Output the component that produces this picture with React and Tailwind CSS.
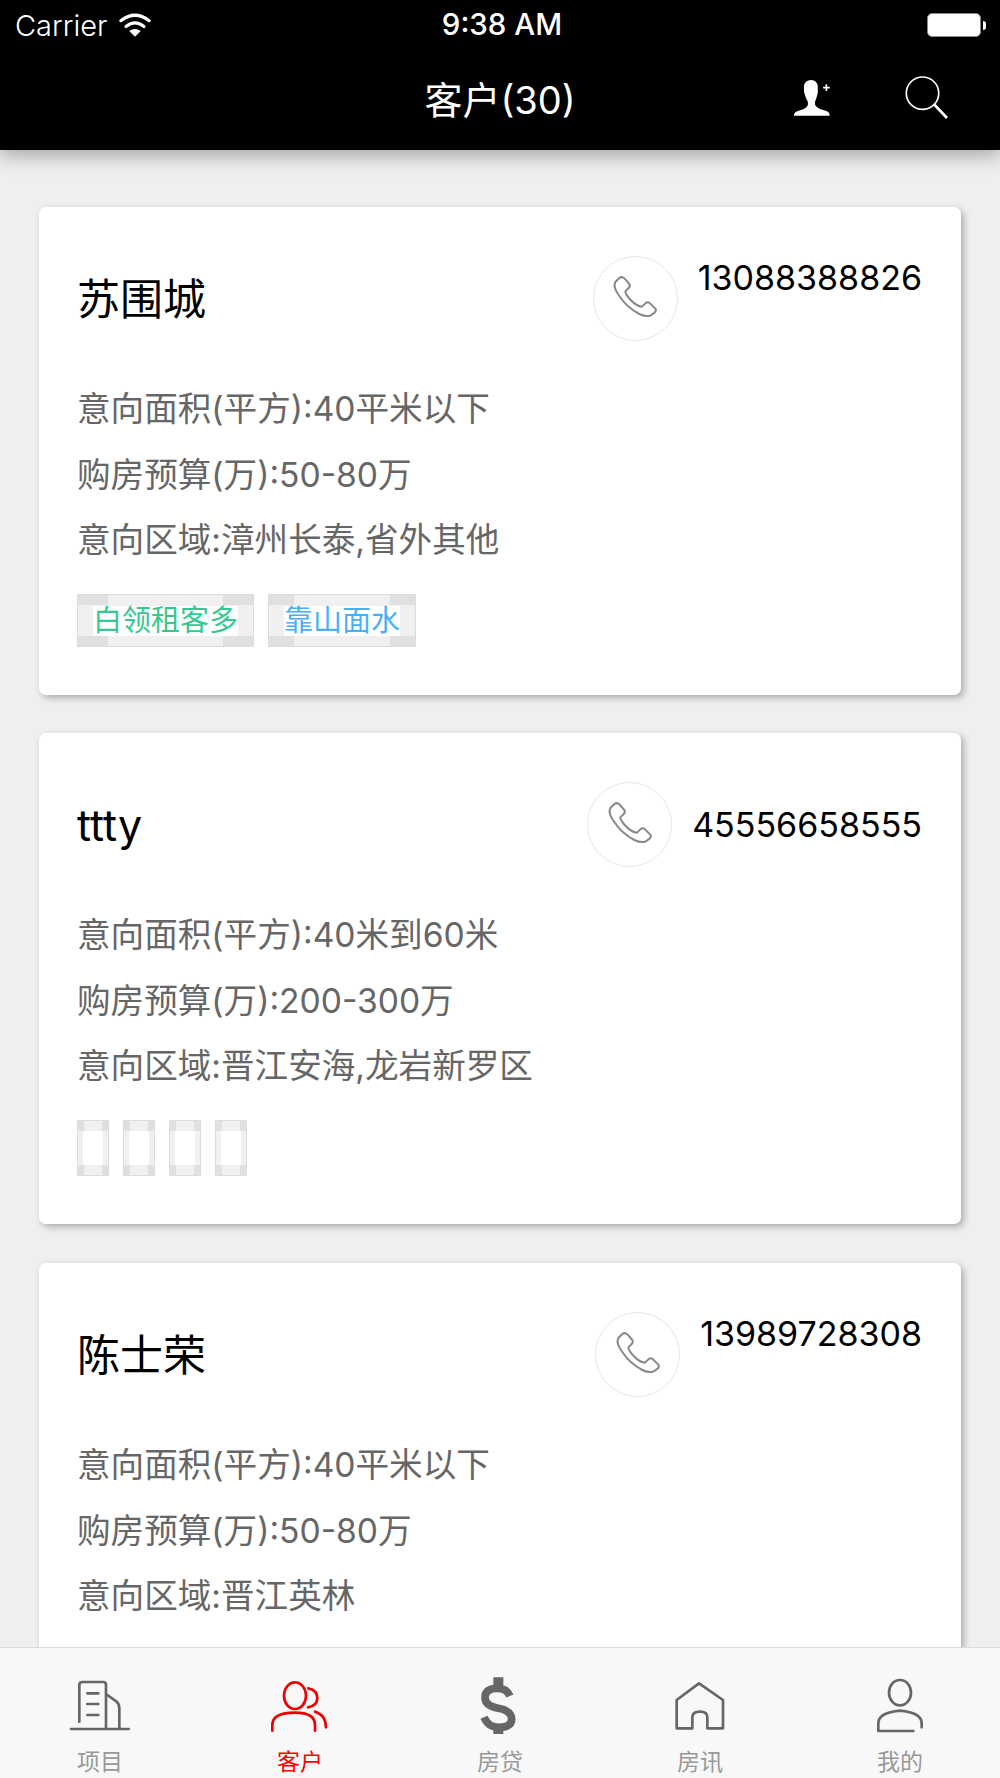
const FONT = "font-['Inter','Noto_Sans_CJK_SC',sans-serif]";

function Tag({ text, color, corner, tall }) {
  const cornerClass = `absolute h-[10px] bg-[#e0e0e0] ${corner}`;
  return (
    <div className="relative border border-[#dcdcdc] bg-[#f0f0f0]">
      <div className={`${cornerClass} left-0 top-0`} />
      <div className={`${cornerClass} right-0 top-0`} />
      <div className={`${cornerClass} left-0 bottom-0`} />
      <div className={`${cornerClass} right-0 bottom-0`} />
      {tall ? (
        <div className="relative mx-[5px] my-[10px] h-[34px] w-[20px] bg-white" />
      ) : (
        <div className={`relative mx-[15px] mb-[10px] mt-[11px] h-[30px] bg-white text-[29px] leading-[30px] ${color}`}>{text}</div>
      )}
    </div>
  );
}

function PhoneIcon() {
  return (
    <svg width="70" height="70" viewBox="0 0 210 210" fill="none" stroke="#888" strokeWidth="6" strokeLinejoin="round">
      <path d="M58 42 Q66 36 74 44 L88 60 Q92 66 86 72 L76 82 Q77 92 92 108 Q110 127 126 128 L136 118 Q144 112 150 118 L166 134 Q170 140 164 146 L152 154 Q140 160 118 150 Q80 130 58 96 Q38 70 46 54 Z" />
    </svg>
  );
}

function Card({ name, phone, lines, children, mb = "mb-[38px]", align = "items-start" }) {
  return (
    <div className={`rounded-[7px] bg-white pb-[48px] pl-[38px] pr-[39px] pt-[49px] shadow-[3px_3px_7px_rgba(0,0,0,0.28)] ${mb}`}>
      <div className="flex items-start justify-between">
        <div className="flex h-[86px] items-center text-[43px] leading-none text-black">{name}</div>
        <div className={`flex gap-[20px] ${align}`}>
          <div className="flex h-[85px] w-[85px] items-center justify-center rounded-full border border-[#e6e6e6]">
            <PhoneIcon />
          </div>
          <div className="text-[34px] leading-[44px] text-black">{phone}</div>
        </div>
      </div>
      <div className="mt-[34px] text-[33.6px] leading-[65.5px] text-[#666]">
        {lines.map((l) => (
          <div key={l}>{l}</div>
        ))}
      </div>
      {children && <div className="mt-[21.5px] flex gap-[14px]">{children}</div>}
    </div>
  );
}

const IC = { fill: "none", stroke: "#666", strokeWidth: 8, strokeLinecap: "round", strokeLinejoin: "round" };
const RED = { ...IC, stroke: "#ee0000" };

function TabIcon({ vb, children }) {
  return (
    <svg width="80" height="75" viewBox={vb} className="block">
      {children}
    </svg>
  );
}

function Tab({ label, active, vb, children }) {
  return (
    <div className="flex flex-col items-center pt-[22px]">
      <TabIcon vb={vb}>{children}</TabIcon>
      <div className={`mt-[2px] text-[23px] leading-[30px] ${active ? "text-[#ff0000]" : "text-[#999]"}`}>{label}</div>
    </div>
  );
}

export default function App() {
  return (
    <div className={`flex h-[1778px] w-[1000px] flex-col overflow-hidden bg-[#efefef] ${FONT}`}>
      <header className="relative z-10 bg-black text-white shadow-[0_6px_18px_rgba(0,0,0,0.3)]">
        <div className="grid h-[45px] grid-cols-[1fr_auto_1fr] items-center pl-[15px] pr-[14px] pt-[5px]">
          <div className="flex items-center gap-[12px]">
            <span className="text-[29px] font-light leading-none">Carrier</span>
            <svg width="32" height="24" viewBox="0 0 100 75" fill="none" stroke="white" strokeWidth="10" strokeLinecap="round">
              <path d="M6 24 Q50 -10 94 24" />
              <path d="M22 42 Q50 20 78 42" />
              <path d="M50 74 L32 56 Q50 44 68 56 Z" fill="white" stroke="none" />
            </svg>
          </div>
          <span className="ml-[3px] text-[29.5px] font-medium leading-none">9:38 AM</span>
          <div className="flex items-center justify-end gap-[2px]">
            <div className="h-[24px] w-[54px] rounded-[5px] border border-[#888] bg-white" />
            <div className="h-[9px] w-[3px] rounded-r-full bg-white" />
          </div>
        </div>
        <div className="grid h-[105px] grid-cols-[1fr_auto_1fr] items-center pl-[49px] pr-[49px]">
          <div />
          <h1 className="mt-[4px] text-[38px] font-normal leading-none">客户(30)</h1>
          <div className="flex items-center justify-end gap-[70px]">
            <svg width="43" height="42" viewBox="30 30 130 125">
              <path fill="white" d="M94 38 Q112 38 114 58 Q116 78 110 92 Q104 104 106 114 Q112 126 140 132 Q150 136 150 146 L42 146 Q42 136 54 132 Q80 126 84 114 Q86 104 78 92 Q70 76 72 58 Q74 38 94 38 Z" />
              <path stroke="white" strokeWidth="5" d="M130 61 H150 M140 51 V71" />
            </svg>
            <svg width="48" height="48" viewBox="370 20 145 145" fill="none" stroke="white">
              <circle cx="429" cy="78" r="49" strokeWidth="5" />
              <path d="M465 113 L503 153" strokeWidth="8" />
            </svg>
          </div>
        </div>
      </header>

      <main className="min-h-0 flex-1 overflow-hidden pl-[39px] pr-[39px] pt-[57px]">
        <Card name="苏围城" phone="13088388826" lines={["意向面积(平方):40平米以下", "购房预算(万):50-80万", "意向区域:漳州长泰,省外其他"]}>
          <Tag text="白领租客多" color="text-[#35c98f]" corner="w-[30px]" />
          <Tag text="靠山面水" color="text-[#46b1f5]" corner="w-[25px]" />
        </Card>
        <Card mb="mb-[39px]" align="items-center" name="ttty" phone="45556658555" lines={["意向面积(平方):40米到60米", "购房预算(万):200-300万", "意向区域:晋江安海,龙岩新罗区"]}>
          <Tag tall corner="w-[6px]" />
          <Tag tall corner="w-[6px]" />
          <Tag tall corner="w-[6px]" />
          <Tag tall corner="w-[6px]" />
        </Card>
        <Card name="陈士荣" phone="13989728308" lines={["意向面积(平方):40平米以下", "购房预算(万):50-80万", "意向区域:晋江英林"]} />
      </main>

      <nav className="grid h-[131px] shrink-0 grid-cols-5 border-t border-[#dcdcdc] bg-[#f8f8f8]">
        <Tab label="项目" vb="180 120 240 225">
          <g {...IC}>
            <path d="M213 297 H386" />
            <path d="M238 275 V165 Q238 156 247 156 H310 Q318 156 318 165 V295" />
            <path d="M322 195 L350 215 Q358 222 358 235 V295" />
            <path d="M262 190 H295 M262 222 H295 M262 255 H295" />
          </g>
        </Tab>
        <Tab label="客户" active vb="780 120 240 225">
          <g {...RED}>
            <ellipse cx="885" cy="197" rx="33" ry="40" />
            <path d="M925 175 Q952 180 952 205 Q952 228 924 232" />
            <path d="M817 302 V285 Q817 248 885 248 Q945 248 945 285 V302" />
            <path d="M945 245 Q978 255 978 292" />
          </g>
        </Tab>
        <Tab label="房贷" vb="0 0 240 225">
          <g fill="none" stroke="#666">
            <path strokeWidth="23" d="M150 78 Q140 55 112 55 Q75 55 75 82 Q75 108 115 115 Q155 122 155 148 Q155 172 115 172 Q85 172 72 142" />
            <path strokeWidth="30" d="M115 22 V52 M115 168 V192" />
          </g>
        </Tab>
        <Tab label="房讯" vb="480 120 240 225">
          <g {...IC}>
            <path d="M530 295 V210 L597 160 L669 210 V295 H622 V262 Q622 245 600 245 Q577 245 577 262 V295 Z" />
          </g>
        </Tab>
        <Tab label="我的" vb="1080 120 240 225">
          <g {...IC}>
            <ellipse cx="1200" cy="188" rx="33" ry="38" />
            <path d="M1240 303 H1135 V280 Q1135 248 1200 242 Q1265 248 1265 280 V292" />
          </g>
        </Tab>
      </nav>
    </div>
  );
}
